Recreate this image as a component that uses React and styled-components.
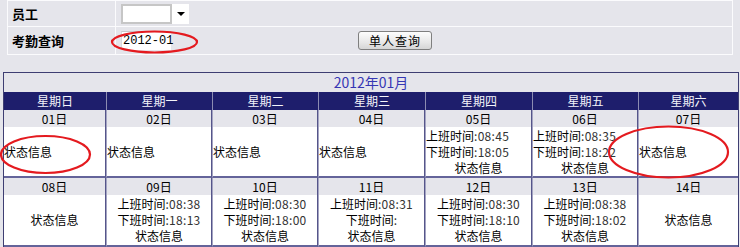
import React from "react";
import styled, { createGlobalStyle } from "styled-components";

const Global = createGlobalStyle`
  html, body { margin: 0; padding: 0; background: #e5e5eb; }
  body { font-family: "Noto Sans CJK SC", "Liberation Sans", sans-serif; font-size: 12px; color: #000; }
`;

const Page = styled.div`
  position: relative;
  width: 740px;
  height: 247px;
  overflow: hidden;
`;

const FormTable = styled.div`
  margin-left: 7px;
  width: 724px;
  border: 1px solid #fbfbfd;
  border-bottom: none;
`;

const FormRow = styled.div`
  display: grid;
  grid-template-columns: 108px 1fr;
  height: ${(p) => p.$h}px;
  border-bottom: 1px solid #fbfbfd;
`;

const Label = styled.div`
  display: flex;
  align-items: center;
  padding-left: 4px;
  font-weight: bold;
  font-size: 13px;
  border-right: 1px solid #fbfbfd;
`;

const Value = styled.div`
  display: flex;
  align-items: center;
  padding-left: 5px;
`;

const Select = styled.div`
  display: flex;
  height: 20px;
  width: 68px;
  margin-top: 1px;
`;

const SelectField = styled.div`
  width: 47px;
  background: #fff;
  border: 2px solid #c6c6c6;
`;

const SelectBtn = styled.div`
  width: 17px;
  background: #fff;
  display: flex;
  align-items: center;
  justify-content: center;
`;

const Arrow = styled.div`
  width: 0;
  height: 0;
  border-left: 4px solid transparent;
  border-right: 4px solid transparent;
  border-top: 4px solid #000;
`;

const Input = styled.div`
  width: 50px;
  height: 19px;
  background: #fff;
  border-top: 1px solid #c8c8cc;
  border-left: 1px solid #d8d8dc;
  box-sizing: border-box;
  font-family: "Liberation Mono", monospace;
  font-size: 12px;
  line-height: 18px;
  padding-left: 1px;
  overflow: visible;
  white-space: nowrap;
`;

const Button = styled.div`
  margin-left: 187px;
  width: 74px;
  height: 19px;
  box-sizing: border-box;
  border: 1px solid #7f7f7f;
  border-radius: 3px;
  background: linear-gradient(#fdfdfd, #e8e8e8 60%, #d6d6d6);
  display: flex;
  align-items: center;
  justify-content: center;
  font-size: 12px;
  letter-spacing: 1px;
`;

const Calendar = styled.div`
  margin: 17px 0 0 3px;
  width: 734px;
  border: 1px solid #3e3e72;
  border-bottom: none;
`;

const Title = styled.div`
  height: 19px;
  line-height: 19px;
  text-align: center;
  color: #3636b4;
  font-size: 14px;
`;

const Grid = styled.div`
  display: grid;
  grid-template-columns: 102px 106px 106px 107px 107px 106px 100px;
`;

const HeadCell = styled.div`
  background: #1e1e6c;
  color: #f4f4fa;
  height: 18px;
  line-height: 18px;
  text-align: center;
  font-size: 12px;
  border-left: ${(p) => (p.$first ? "none" : "1px solid #8c8cb2")};
`;

const DayCell = styled.div`
  display: flex;
  flex-direction: column;
  border-left: ${(p) => (p.$first ? "none" : "1px solid #a4a4c2")};
  border-right: ${(p) => (p.$last ? "none" : "1px solid #55558a")};
  border-bottom: 2px solid #64649a;
`;

const DayNum = styled.div`
  height: 17px;
  line-height: 17px;
  text-align: center;
  background: #e5e5eb;
  font-size: 12px;
`;

const Content = styled.div`
  background: #fff;
  height: ${(p) => p.$h}px;
  display: flex;
  flex-direction: column;
  justify-content: center;
  align-items: ${(p) => (p.$left ? "flex-start" : "center")};
  font-size: 12px;
  line-height: 16px;
  white-space: nowrap;
`;

const Line = styled.div`
  align-self: ${(p) => (p.$center ? "center" : "auto")};
`;

const Time = styled.span`
  color: #333;
  letter-spacing: 0.3px;
`;

const Overlay = styled.svg`
  position: absolute;
  left: 0;
  top: 0;
  pointer-events: none;
`;

const week1 = [
  { d: "01日", left: true },
  { d: "02日", left: true },
  { d: "03日", left: true },
  { d: "04日", left: true },
  { d: "05日", left: true, on: "08:45", off: "18:05" },
  { d: "06日", left: true, on: "08:35", off: "18:22" },
  { d: "07日", left: true },
];

const week2 = [
  { d: "08日" },
  { d: "09日", on: "08:38", off: "18:13" },
  { d: "10日", on: "08:30", off: "18:00" },
  { d: "11日", on: "08:31", off: "" },
  { d: "12日", on: "08:30", off: "18:10" },
  { d: "13日", on: "08:38", off: "18:02" },
  { d: "14日" },
];

const heads = ["星期日", "星期一", "星期二", "星期三", "星期四", "星期五", "星期六"];

function Day({ item, i, h }) {
  const hasTime = item.on !== undefined;
  return (
    <DayCell $first={i === 0} $last={i === 6}>
      <DayNum>{item.d}</DayNum>
      <Content $h={h} $left={item.left}>
        {hasTime ? (
          <>
            <Line>
              上班时间<Time>:{item.on}</Time>
            </Line>
            <Line>
              下班时间<Time>:{item.off}</Time>
            </Line>
            <Line $center>状态信息</Line>
          </>
        ) : (
          <Line>状态信息</Line>
        )}
      </Content>
    </DayCell>
  );
}

export default function App() {
  return (
    <Page>
      <Global />
      <FormTable>
        <FormRow $h={25}>
          <Label>员工</Label>
          <Value>
            <Select>
              <SelectField />
              <SelectBtn>
                <Arrow />
              </SelectBtn>
            </Select>
          </Value>
        </FormRow>
        <FormRow $h={27}>
          <Label>考勤查询</Label>
          <Value>
            <Input>2012-01</Input>
            <Button>单人查询</Button>
          </Value>
        </FormRow>
      </FormTable>
      <Calendar>
        <Title>2012年01月</Title>
        <Grid>
          {heads.map((h, i) => (
            <HeadCell key={h} $first={i === 0}>
              {h}
            </HeadCell>
          ))}
        </Grid>
        <Grid>
          {week1.map((it, i) => (
            <Day key={it.d} item={it} i={i} h={49} />
          ))}
        </Grid>
        <Grid>
          {week2.map((it, i) => (
            <Day key={it.d} item={it} i={i} h={50} />
          ))}
        </Grid>
      </Calendar>
      <Overlay width="740" height="247">
        <g fill="none" stroke="#e41a1f" strokeWidth="2.2">
          <ellipse cx="154.5" cy="42" rx="42.5" ry="10.5" />
          <ellipse cx="45.5" cy="154.5" rx="44.5" ry="18.5" />
          <ellipse cx="668.5" cy="152" rx="59.5" ry="25.5" />
        </g>
      </Overlay>
    </Page>
  );
}
